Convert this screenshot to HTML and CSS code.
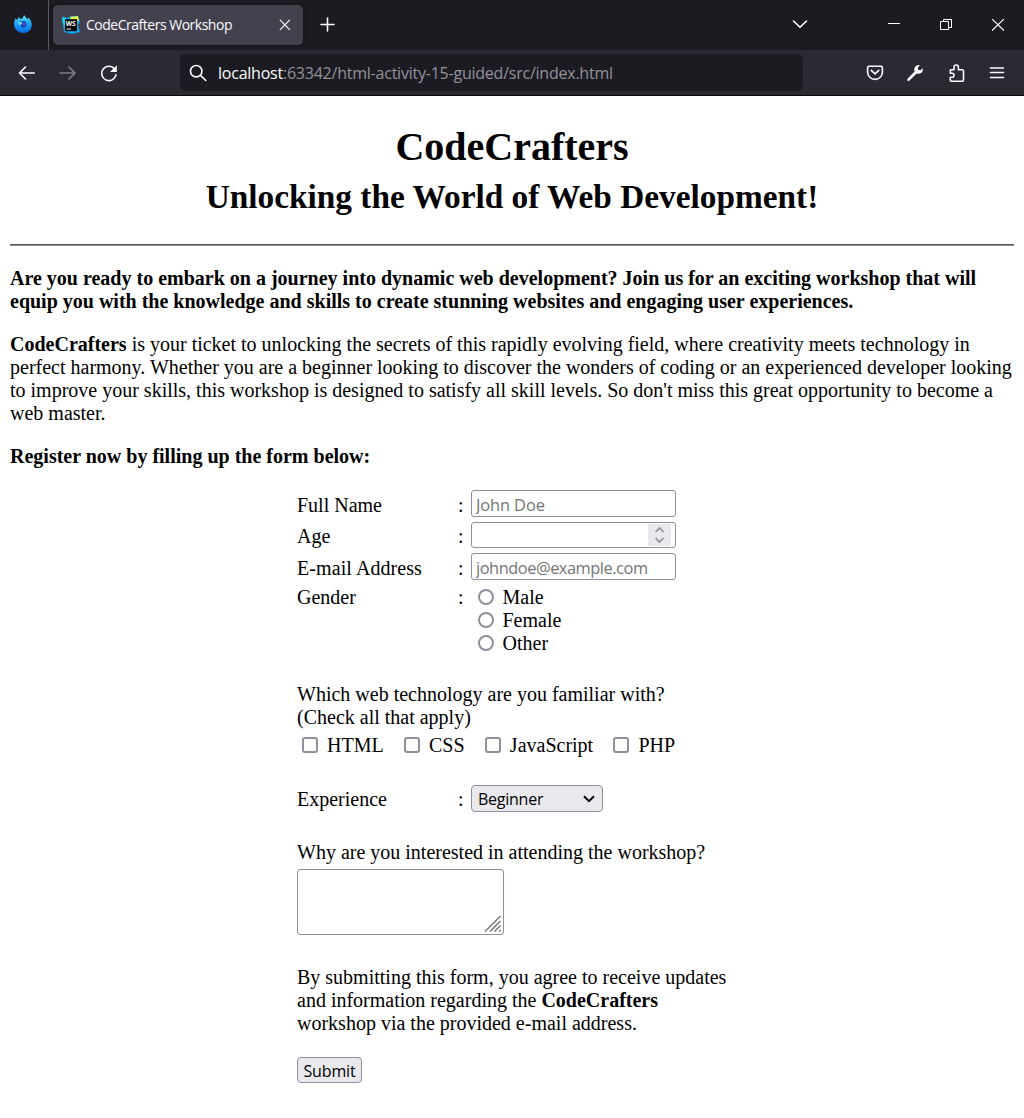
FILE: index.html
```
<!DOCTYPE html>
<html lang="en">
<head>
<meta charset="utf-8">
<title>CodeCrafters Workshop</title>
<link rel="stylesheet" href="styles.css">
</head>
<body>
<header class="browser">
  <div class="tabbar">
    <div class="pinned">
      <svg width="20" height="20" viewBox="0 0 20 20">
        <defs><linearGradient id="fx" x1="0" y1="0" x2="0" y2="1"><stop offset="0" stop-color="#5ce8fa"/><stop offset=".45" stop-color="#20a9f8"/><stop offset="1" stop-color="#0768e3"/></linearGradient></defs>
        <path d="M2.6 4.2 4.2 6 6 2.8 7.6 5.2Q9.8 4.8 11 1L14 4.7Q15.5 5.2 15.3 3.6 19 7 18.7 11.4C18.2 16 14.5 19 10 19S1.2 15.4 1 10.6Q.9 7 2.6 4.2Z" fill="url(#fx)"/>
        <path d="M6 8Q9 6.4 12.4 7.6 14.2 9.5 13.3 11.6 12.2 13.8 9.8 13.4 7.6 13.2 6.8 11.3L8.6 10.8Z" fill="#1b3cac"/>
        <path d="M4.8 7.8 8.4 7.9 10 9.3 7.5 10.5 8.5 12Q6.2 11.7 4.8 7.8Z" fill="#67d9f7"/>
        <circle cx="11" cy="10" r="1.8" fill="#5947c4"/>
      </svg>
    </div>
    <div class="tab">
      <svg width="18" height="18" viewBox="0 0 18 18">
        <path d="M0 1 6 2 9 0 16 0 18 6 16 9 18 16 10 18 2 16Z" fill="#08a9ee"/>
        <path d="M8 1 16 0 17 5 9 4Z" fill="#edf344"/>
        <path d="M0 1 4 2 3 10 1 8Z" fill="#14d6e7"/>
        <path d="M3 3.2H15V15.2H3Z" fill="#050505"/>
        <text x="3.8" y="9.6" class="ws">WS</text>
        <path d="M4.5 13H9" stroke="#fff"/>
      </svg>
      <span class="tab-title">CodeCrafters Workshop</span>
      <svg class="tab-close" width="12" height="12" viewBox="0 0 12 12"><path d="M1.2 1.2 10.6 10.6M10.6 1.2 1.2 10.6" class="line thin"/></svg>
    </div>
    <svg class="plus" width="16" height="16" viewBox="0 0 16 16"><path d="M7.5 1V14M1 7.5H14" class="line"/></svg>
    <div class="window-controls">
      <svg width="16" height="10" viewBox="0 0 16 10"><path d="M1.5 1 8 7.3 14.5 1" class="line"/></svg>
      <svg width="12" height="12" viewBox="0 0 12 12"><path d="M0 5.5H12" stroke="#fff"/></svg>
      <svg width="12" height="12" viewBox="0 0 12 12"><path d="M.5 2.5H8.5V10.5H.5ZM3.5 2.5V.5H11.5V8.5H8.5" class="sharp"/></svg>
      <svg width="12" height="12" viewBox="0 0 12 12"><path d="M.3.3 11.7 11.3M11.7.3.3 11.3" class="line thin"/></svg>
    </div>
  </div>
  <div class="toolbar">
    <div class="nav">
      <svg width="18" height="18" viewBox="0 0 18 18"><path d="M16.3 9H1.5M7.5 3 1.5 9 7.5 15" class="line"/></svg>
      <svg class="dim" width="18" height="18" viewBox="0 0 18 18"><path d="M1 9H16M10 3 16 9 10 15" class="line"/></svg>
      <svg width="18" height="18" viewBox="0 0 18 18"><path d="M14.6 5A7.2 7.2 0 1 0 16 10.8" class="line"/><path d="M16.8 1.2V8H10Z" fill="#fbfbfe"/></svg>
    </div>
    <div class="urlbar">
      <svg width="18" height="18" viewBox="0 0 18 18"><circle cx="7.2" cy="7.2" r="5.7" class="line"/><path d="M11.4 11.4 16.8 16.5" class="line"/></svg>
      <span class="url"><b>localhost</b>:63342/html-activity-15-guided/src/index.html</span>
    </div>
    <div class="actions">
      <svg width="18" height="18" viewBox="0 0 18 18"><path d="M3 2.2H15Q16.4 2.2 16.4 3.7V8.2A7.4 7.2 0 0 1 1.6 8.2V3.7Q1.6 2.2 3 2.2ZM5.2 6.4 9 9.9 12.8 6.4" class="line"/></svg>
      <svg width="18" height="18" viewBox="0 0 18 18"><path d="M13.8 1.2 11.8 3.7 12.3 6 14.5 6.3 16.6 4Q17.4 8.5 14 9.6 12.2 10 10.7 9.4L3.5 16.4Q2.2 17.4 1.5 16.4 1 15.5 1.8 14.6L8.6 7.6Q7.5 4.2 9.7 2.2 11.5.8 13.8 1.2Z" fill="#fbfbfe"/></svg>
      <svg width="20" height="20" viewBox="0 0 20 20"><path d="M3.4 6.7H7V4.2A2 2 0 0 1 11.4 4.2V6.7H15.3Q16.5 6.7 16.5 8V17Q16.5 18.2 15.3 18.2H4.5Q3.3 18.2 3.3 17V14.3H5A1.9 1.9 0 0 0 5 10.3H3.3Z" class="line"/></svg>
      <svg width="16" height="16" viewBox="0 0 16 16"><path d="M1.5 3H14.5M1.5 7.5H14.5M1.5 12.5H14.5" class="line"/></svg>
    </div>
  </div>
</header>
<main class="page">
  <h1>CodeCrafters<span class="tagline">Unlocking the World of Web Development!</span></h1>
  <hr>
  <p><b>Are you ready to embark on a journey into dynamic web development? Join us for an exciting workshop that will<br>equip you with the knowledge and skills to create stunning websites and engaging user experiences.</b></p>
  <p><b>CodeCrafters</b> is your ticket to unlocking the secrets of this rapidly evolving field, where creativity meets technology in<br>perfect harmony. Whether you are a beginner looking to discover the wonders of coding or an experienced developer looking<br>to improve your skills, this workshop is designed to satisfy all skill levels. So don't miss this great opportunity to become a<br>web master.</p>
  <p><b>Register now by filling up the form below:</b></p>
  <form class="form">
    <div class="row"><label>Full Name</label><span>:</span><input class="field" type="text" placeholder="John Doe"></div>
    <div class="row"><label>Age</label><span>:</span>
      <div class="field number"><svg width="24" height="22" viewBox="0 0 24 22"><path d="M0 0H23V22H0Z" fill="#e9e9ed"/><path d="M7.5 8 11.5 4 15.5 8M7.5 14 11.5 18 15.5 14" fill="none" stroke="#8f8f9d" stroke-width="1.7"/></svg></div>
    </div>
    <div class="row"><label class="wide">E-mail Address</label><span>:</span><input class="field email" type="text" placeholder="johndoe@example.com"></div>
    <div class="row gender"><label>Gender</label><span>:</span>
      <div class="radios">
        <label><input type="radio" name="g">Male</label>
        <label><input type="radio" name="g">Female</label>
        <label><input type="radio" name="g">Other</label>
      </div>
    </div>
    <div class="question">Which web technology are you familiar with?<br>(Check all that apply)</div>
    <div class="checks">
      <label><input type="checkbox">HTML</label>
      <label><input type="checkbox">CSS</label>
      <label><input type="checkbox">JavaScript</label>
      <label><input type="checkbox">PHP</label>
    </div>
    <div class="row experience"><label>Experience</label><span>:</span>
      <div class="select">Beginner<svg width="12" height="8" viewBox="0 0 12 8"><path d="M1 1.2 6 6.2 11 1.2" fill="none" stroke="#000" stroke-width="2"/></svg></div>
    </div>
    <div class="why">Why are you interested in attending the workshop?</div>
    <div class="textarea"><svg width="16" height="16" viewBox="0 0 16 16"><path d="M0 15.5 15.5 0M5 15.5 15.5 5M9.5 15.5 15.5 9.5M14 15.5 15.5 14" stroke="#666" stroke-width="1.2"/></svg></div>
    <div class="agree">By submitting this form, you agree to receive updates<br>and information regarding the <b>CodeCrafters</b><br>workshop via the provided e-mail address.</div>
    <button class="submit" type="button">Submit</button>
  </form>
</main>
</body>
</html>
```
FILE: styles.css
```
* { box-sizing: border-box; }
body { margin: 0; background: #fff; color: #000; font: 20px/23px "Liberation Serif", serif; overflow: hidden; }
svg { display: block; flex: none; }
.browser { font-family: "Open Sans", sans-serif; color: #fbfbfe; }
.line { fill: none; stroke: #fbfbfe; stroke-width: 1.6; stroke-linecap: round; stroke-linejoin: round; }
.thin { stroke-width: 1.2; }
.sharp { fill: none; stroke: #fff; }
.ws { font: bold 6.5px "Open Sans", sans-serif; fill: #fff; }
.tabbar { height: 50px; background: #1c1b22; display: flex; align-items: center; }
.pinned { width: 49px; height: 50px; border-right: 1px solid #5a5960; padding: 14px 0 0 13px; }
.tab { width: 250px; height: 40px; margin-left: 4px; padding: 0 12px 0 9px; border-radius: 5px; background: #42414d; display: flex; align-items: center; box-shadow: 0 0 3px #111; }
.tab-title { margin-left: 6px; font-size: 14px; line-height: 20px; letter-spacing: -.49px; white-space: nowrap; }
.tab-close { margin-left: auto; }
.plus { margin-left: 17px; }
.window-controls { margin-left: auto; padding-right: 20px; display: flex; align-items: center; }
.window-controls svg + svg { margin-left: 40px; }
.window-controls svg:nth-child(2) { margin-left: 80px; margin-top: -3px; }
.toolbar { height: 46px; background: #2b2a33; border-bottom: 1px solid #0c0c0d; display: flex; align-items: center; }
.nav { width: 180px; padding-left: 18px; display: flex; gap: 23px; }
.dim { opacity: .4; }
.urlbar { width: 623px; height: 37px; padding-left: 9px; border-radius: 5px; background: #1c1b22; display: flex; align-items: center; }
.url { margin-left: 11px; font-size: 16px; line-height: 24px; letter-spacing: -.23px; color: #93929a; white-space: nowrap; }
.url b { font-weight: 400; color: #fbfbfe; }
.actions { margin-left: auto; padding-right: 19px; display: flex; align-items: center; gap: 22px; }
.actions svg:nth-child(-n+2) { margin: 0 1px 0 -1px; }
.page { padding: 28px 10px 0; white-space: nowrap; }
h1 { height: 92px; margin: 0; font-size: 40px; line-height: 46px; text-align: center; }
.tagline { display: block; padding-top: 4px; font-size: 33.33px; }
hr { height: 2px; margin: 28px 0 21px; border: 0; border-top: 1px solid #555; border-bottom: 1px solid #8d8d8d; }
p { margin: 0 0 20px; }
.form { width: 430px; margin: 22px 0 0 287px; }
.row { height: 27px; display: grid; grid-template: 100% / 161px 13px 205px; align-items: center; margin-bottom: 5px; }
.row > label, .row > span { padding-top: 3px; }
.row:nth-child(2) { height: 26px; }
.row:nth-child(2) > label, .row:nth-child(2) > span { padding-top: 2px; }
.wide { letter-spacing: .08px; }
.field { width: 205px; height: 100%; margin: 0; padding: 3px 4px 1px; border: 1px solid #8f8f9d; border-radius: 3px; background: #fff; font: 16.4px/20px "Open Sans", sans-serif; letter-spacing: -.1px; outline: 0; }
.email { letter-spacing: -.47px; }
.field::placeholder { color: #757575; opacity: 1; }
.number { padding: 1px 3px 0 0; display: flex; justify-content: flex-end; }
.row.gender { height: 69px; align-items: start; margin: 0; }
.gender > label, .gender > span { padding-top: 1px; }
.row.gender > label, .row.gender > span { padding-top: 1px; }
.radios { padding: 1px 0 0 7px; }
.radios label { display: flex; align-items: center; gap: 8.5px; }
input[type="radio"], input[type="checkbox"] { appearance: none; width: 16px; height: 16px; margin: -2px 0 0; border: 2px solid #8f8f9d; border-radius: 50%; background: #fff; }
input[type="checkbox"] { border-radius: 3px; }
.question { margin-top: 29px; }
.checks { display: flex; margin: 5px 0 28px 5px; gap: 20.3px; }
.checks label { display: flex; align-items: center; gap: 9px; }
.row.experience { margin: 0; }
.row.experience > label, .row.experience > span { padding-top: 2px; }
.select { width: 132px; height: 27px; padding: 0 7px 0 6px; border: 1px solid #8f8f9d; border-radius: 4px; background: #e9e9ed; display: flex; align-items: center; justify-content: space-between; font: 16px/20px "Open Sans", sans-serif; letter-spacing: -.25px; }
.why { margin-top: 29px; }
.textarea { width: 207px; height: 66px; margin-top: 5px; padding: 0 2px 2px 0; border: 1px solid #8f8f9d; border-radius: 3px; display: flex; align-items: flex-end; justify-content: flex-end; }
.agree { margin-top: 31px; }
.submit { display: block; width: 65px; height: 26px; margin-top: 22px; padding: 1px 0 0; border: 1px solid #8f8f9d; border-radius: 4px; background: #e9e9ed; color: #000; font: 16px/20px "Open Sans", sans-serif; letter-spacing: -.15px; }
```
